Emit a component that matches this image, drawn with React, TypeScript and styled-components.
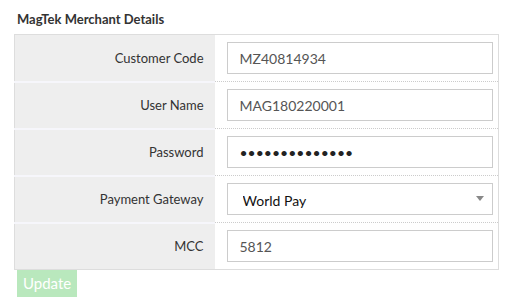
import React from 'react';
import styled, { createGlobalStyle } from 'styled-components';

const GlobalStyle = createGlobalStyle`
  body {
    margin: 0;
    background: #fff;
    font-family: Lato, "Open Sans", "Liberation Sans", sans-serif;
  }
`;

const Page = styled.div`
  padding: 11px 11px 0 14px;
`;

const Title = styled.h3`
  margin: 0 0 7px 3px;
  font-size: 13px;
  font-weight: 700;
  color: #333;
  line-height: 16px;
`;

const Table = styled.table`
  width: 485px;
  border-collapse: collapse;
  border: 1px solid #ddd;
`;

const Row = styled.tr`
  height: 47px;
`;

const LabelCell = styled.td<{ first?: boolean }>`
  width: 200px;
  padding: 0 11px 0 0;
  box-sizing: border-box;
  background: #eee;
  text-align: right;
  font-size: 13px;
  color: #333;
  border-top: ${(p) => (p.first ? 'none' : '2px solid #f6f6fb')};
`;

const ValueCell = styled.td<{ first?: boolean }>`
  padding: 0 4px 0 12px;
  border-top: ${(p) => (p.first ? 'none' : '1px dotted #ccc')};
`;

const Field = styled.input<{ secret?: boolean }>`
  display: block;
  width: 266px;
  height: 32px;
  box-sizing: border-box;
  border: 1px solid #ccc;
  padding: 0 12px;
  font-family: inherit;
  font-size: 14px;
  color: ${(p) => (p.secret ? '#222' : '#555')};
  outline: none;
  background: #fff;
`;

const SelectWrap = styled.div`
  position: relative;
  width: 266px;
`;

const Select = styled.select`
  display: block;
  width: 100%;
  height: 32px;
  box-sizing: border-box;
  border: 1px solid #ccc;
  border-radius: 0;
  padding: 2px 16px 0 15px;
  font-family: inherit;
  font-size: 14px;
  color: #111;
  background: #fff;
  appearance: none;
  outline: none;
`;

const Caret = styled.span`
  position: absolute;
  right: 9px;
  top: 13px;
  width: 0;
  height: 0;
  border-left: 4px solid transparent;
  border-right: 4px solid transparent;
  border-top: 5px solid #888;
  pointer-events: none;
`;

const UpdateButton = styled.button`
  margin: 0 0 0 3px;
  display: block;
  height: 27px;
  padding: 0 6px;
  border: none;
  background: #b9e8bd;
  color: #fff;
  font-family: inherit;
  font-size: 15px;
  line-height: 27px;
`;

const fields = [
  { label: 'Customer Code', value: 'MZ40814934' },
  { label: 'User Name', value: 'MAG180220001' },
  { label: 'Password', value: 'abcdefghijklmn', type: 'password' },
  { label: 'Payment Gateway', value: 'World Pay', type: 'select' },
  { label: 'MCC', value: '5812' },
];

export default function App() {
  return (
    <>
      <GlobalStyle />
      <Page>
        <Title>MagTek Merchant Details</Title>
        <Table>
          <tbody>
            {fields.map((f, i) => (
              <Row key={f.label}>
                <LabelCell first={i === 0}>{f.label}</LabelCell>
                <ValueCell first={i === 0}>
                  {f.type === 'select' ? (
                    <SelectWrap>
                      <Select defaultValue={f.value}>
                        <option>World Pay</option>
                      </Select>
                      <Caret />
                    </SelectWrap>
                  ) : (
                    <Field
                      type={f.type || 'text'}
                      secret={f.type === 'password'}
                      defaultValue={f.value}
                      readOnly
                    />
                  )}
                </ValueCell>
              </Row>
            ))}
          </tbody>
        </Table>
        <UpdateButton disabled>Update</UpdateButton>
      </Page>
    </>
  );
}
